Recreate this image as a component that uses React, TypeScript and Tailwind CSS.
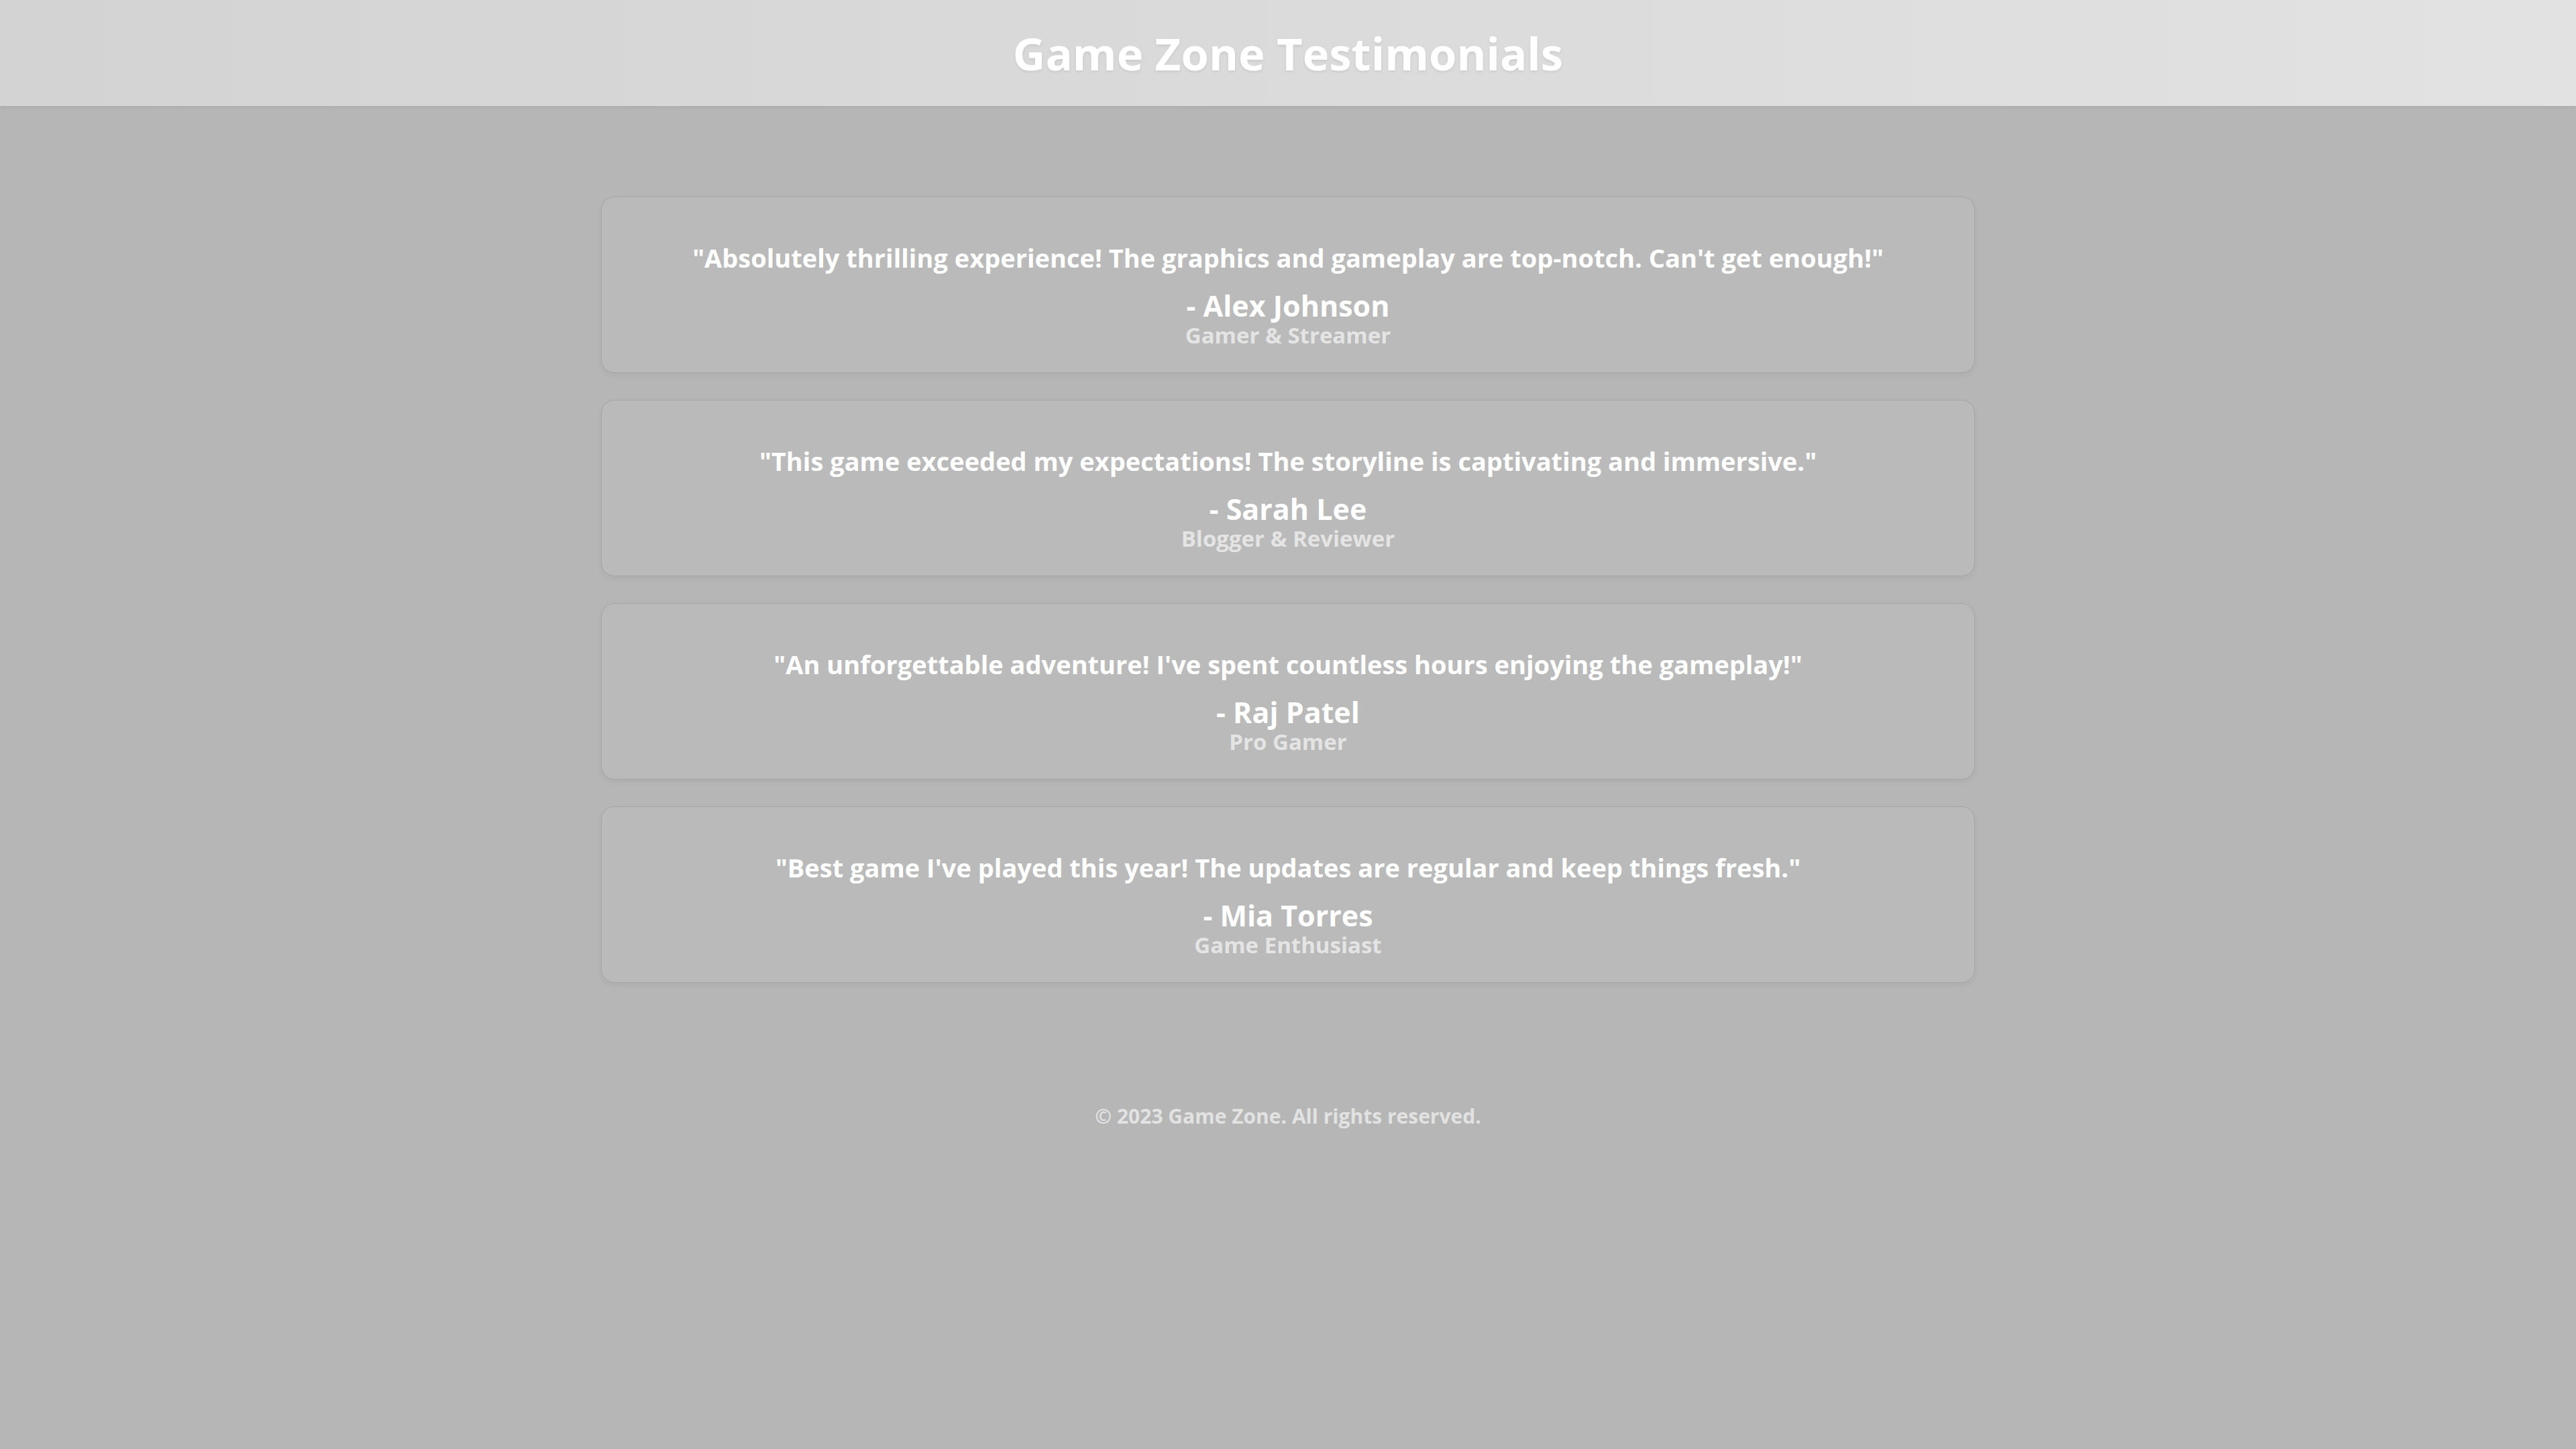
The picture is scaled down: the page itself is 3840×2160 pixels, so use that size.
import React from "react";

const testimonials = [
  { quote: "\"Absolutely thrilling experience! The graphics and gameplay are top-notch. Can't get enough!\"", name: "- Alex Johnson", role: "Gamer & Streamer" },
  { quote: "\"This game exceeded my expectations! The storyline is captivating and immersive.\"", name: "- Sarah Lee", role: "Blogger & Reviewer" },
  { quote: "\"An unforgettable adventure! I've spent countless hours enjoying the gameplay!\"", name: "- Raj Patel", role: "Pro Gamer" },
  { quote: "\"Best game I've played this year! The updates are regular and keep things fresh.\"", name: "- Mia Torres", role: "Game Enthusiast" },
];

export default function App() {
  return (
    <div className="min-h-screen bg-[#b6b6b6] font-['Open_Sans',sans-serif] text-white">
      <header className="h-[158px] flex items-center justify-center bg-gradient-to-r from-[#d3d3d3] to-[#e2e2e2] shadow-[0_2px_6px_rgba(0,0,0,0.06)]">
        <h1 className="text-[67px] font-bold leading-none [text-shadow:0_2px_4px_rgba(0,0,0,0.08)]">Game Zone Testimonials</h1>
      </header>

      <main className="w-[2048px] mx-auto pt-[135px] flex flex-col gap-[40px]">
        {testimonials.map((t) => (
          <div key={t.name} className="bg-[#bababa] border border-[#a6a6a6] rounded-[20px] shadow-[0_4px_10px_rgba(0,0,0,0.05)] pt-[60px] pb-[37px] flex flex-col items-center text-center">
            <p className="text-[38px] font-bold leading-[60px]">{t.quote}</p>
            <p className="mt-[16px] text-[43px] font-bold leading-[52px]">{t.name}</p>
            <p className="text-[33px] font-bold leading-[36px] text-[#e4e4e4]">{t.role}</p>
          </div>
        ))}
      </main>

      <footer className="pt-[179px] text-center">
        <p className="text-[30px] font-bold leading-[40px] text-[#e2e2e2]">© 2023 Game Zone. All rights reserved.</p>
      </footer>
    </div>
  );
}
